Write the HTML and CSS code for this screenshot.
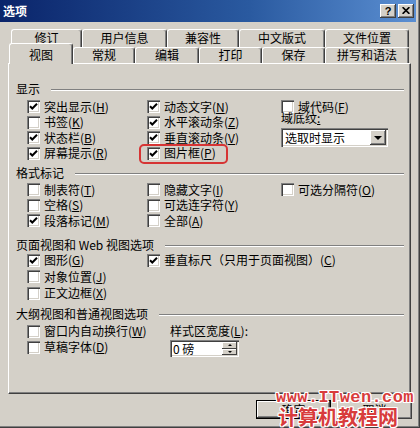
FILE: index.html
```html
<!DOCTYPE html>
<html lang="zh-CN">
<head>
<meta charset="utf-8">
<title>选项</title>
<link rel="stylesheet" href="styles.css">
</head>
<body>
<div class="win">
  <div class="titlebar">
    <span class="title">选项</span>
    <div class="tbtns">
      <span class="tbtn help">?</span>
      <span class="tbtn close"><svg width="8" height="7" viewBox="0 0 8 7"><path d="M0.6 0.2 L7.4 6.8 M7.4 0.2 L0.6 6.8" stroke="#000" stroke-width="1.7" fill="none"/></svg></span>
    </div>
  </div>

  <div class="tabs">
    <div class="tabrow back">
      <span class="tab t71">修订</span>
      <span class="tab t85">用户信息</span>
      <span class="tab t72">兼容性</span>
      <span class="tab t86">中文版式</span>
      <span class="tab t84">文件位置</span>
    </div>
    <div class="tabrow front">
      <span class="tab sel t64">视图</span>
      <span class="tab t62">常规</span>
      <span class="tab t64">编辑</span>
      <span class="tab t63">打印</span>
      <span class="tab t63">保存</span>
      <span class="tab t84">拼写和语法</span>
    </div>
  </div>

  <div class="panel">
    <section class="group g1">
      <div class="ghead"><span>显示</span><i class="etch"></i></div>
      <div class="grid rows4">
        <label class="cb"><span class="box on"><svg viewBox="0 0 13 13"><path d="M3 6.2 L5.3 8.5 L10 3.8" /></svg></span><span>突出显示(<u>H</u>)</span></label>
        <label class="cb"><span class="box"></span><span>书签(<u>K</u>)</span></label>
        <label class="cb"><span class="box on"><svg viewBox="0 0 13 13"><path d="M3 6.2 L5.3 8.5 L10 3.8" /></svg></span><span>状态栏(<u>B</u>)</span></label>
        <label class="cb"><span class="box on"><svg viewBox="0 0 13 13"><path d="M3 6.2 L5.3 8.5 L10 3.8" /></svg></span><span>屏幕提示(<u>R</u>)</span></label>

        <label class="cb"><span class="box on"><svg viewBox="0 0 13 13"><path d="M3 6.2 L5.3 8.5 L10 3.8" /></svg></span><span>动态文字(<u>N</u>)</span></label>
        <label class="cb"><span class="box on"><svg viewBox="0 0 13 13"><path d="M3 6.2 L5.3 8.5 L10 3.8" /></svg></span><span>水平滚动条(<u>Z</u>)</span></label>
        <label class="cb"><span class="box on"><svg viewBox="0 0 13 13"><path d="M3 6.2 L5.3 8.5 L10 3.8" /></svg></span><span>垂直滚动条(<u>V</u>)</span></label>
        <label class="cb"><span class="box on"><svg viewBox="0 0 13 13"><path d="M3 6.2 L5.3 8.5 L10 3.8" /></svg></span><span>图片框(<u>P</u>)</span></label>

        <label class="cb"><span class="box"></span><span>域代码(<u>F</u>)</span></label>
        <div class="shade">
          <span class="lbl">域底纹<u>:</u></span>
          <div class="select"><span class="val">选取时显示</span><span class="dd"><i class="arrow"></i></span></div>
        </div>
      </div>
    </section>

    <section class="group g2">
      <div class="ghead"><span>格式标记</span><i class="etch"></i></div>
      <div class="grid rows3">
        <label class="cb"><span class="box"></span><span>制表符(<u>T</u>)</span></label>
        <label class="cb"><span class="box"></span><span>空格(<u>S</u>)</span></label>
        <label class="cb"><span class="box on"><svg viewBox="0 0 13 13"><path d="M3 6.2 L5.3 8.5 L10 3.8" /></svg></span><span>段落标记(<u>M</u>)</span></label>

        <label class="cb"><span class="box"></span><span>隐藏文字(<u>I</u>)</span></label>
        <label class="cb"><span class="box"></span><span>可选连字符(<u>Y</u>)</span></label>
        <label class="cb"><span class="box"></span><span>全部(<u>A</u>)</span></label>

        <label class="cb"><span class="box"></span><span>可选分隔符(<u>O</u>)</span></label>
      </div>
    </section>

    <section class="group g3">
      <div class="ghead"><span>页面视图和 Web 视图选项</span><i class="etch"></i></div>
      <div class="grid rows3b">
        <label class="cb"><span class="box on"><svg viewBox="0 0 13 13"><path d="M3 6.2 L5.3 8.5 L10 3.8" /></svg></span><span>图形(<u>G</u>)</span></label>
        <label class="cb"><span class="box"></span><span>对象位置(<u>J</u>)</span></label>
        <label class="cb"><span class="box"></span><span>正文边框(<u>X</u>)</span></label>

        <label class="cb"><span class="box on"><svg viewBox="0 0 13 13"><path d="M3 6.2 L5.3 8.5 L10 3.8" /></svg></span><span>垂直标尺（只用于页面视图）(<u>C</u>)</span></label>
      </div>
    </section>

    <section class="group g4">
      <div class="ghead"><span>大纲视图和普通视图选项</span><i class="etch"></i></div>
      <div class="grid rows2">
        <label class="cb"><span class="box"></span><span>窗口内自动换行(<u>W</u>)</span></label>
        <label class="cb"><span class="box"></span><span>草稿字体(<u>D</u>)</span></label>

        <span class="lbl2">样式区宽度(<u>L</u>):</span>
        <div class="spin"><span class="val">0 磅</span><span class="spinbtns"><span class="sb up"><i></i></span><span class="sb down"><i></i></span></span></div>
      </div>
    </section>
  </div>

  <div class="actions">
    <button class="btn default">确定</button>
    <button class="btn">取消</button>
  </div>

  <div class="highlight"></div>
  <div class="watermark">
    <span class="wm1">www.ITwen.com</span>
    <span class="wm2">计算机教程网</span>
  </div>
</div>
</body>
</html>
```

FILE: styles.css
```css
* { box-sizing: border-box; }

html, body {
  margin: 0;
  padding: 0;
  background: #d4d0c8;
}

body {
  width: 420px;
  height: 428px;
  overflow: hidden;
  font-family: "Noto Sans CJK SC", "Noto Sans", sans-serif;
  font-size: 12px;
  color: #000;
}

.win {
  position: relative;
  width: 420px;
  height: 428px;
  padding: 0 4px 4px 0;
  background: #d4d0c8;
  box-shadow: inset -1px -1px #404040, inset -2px -2px #808080;
}

/* title bar */
.titlebar {
  height: 22px;
  display: flex;
  align-items: center;
  justify-content: space-between;
  padding: 0 2px 0 3px;
  background: linear-gradient(to right, #0a246a 0%, #2a5aa0 60%, #5b8fd2 100%);
}

.title {
  color: #fff;
  font-weight: bold;
  font-size: 12px;
  line-height: 14px;
}

.tbtns {
  display: flex;
  gap: 2px;
}

.tbtn {
  width: 16px;
  height: 14px;
  background: #d4d0c8;
  box-shadow: inset -1px -1px #404040, inset 1px 1px #fff, inset -2px -2px #808080;
  display: flex;
  align-items: center;
  justify-content: center;
}

.help {
  font-family: "Liberation Sans", Arial, sans-serif;
  font-weight: bold;
  font-size: 11px;
  line-height: 12px;
  padding-bottom: 1px;
}

.close svg { display: block; margin-bottom: 1px; }

/* tabs */
.tabs {
  margin-top: 7px;
}

.tabrow {
  display: flex;
}

.tabrow.back {
  height: 18px;
  margin-left: 11px;
}

.tabrow.front {
  height: 16px;
  margin-left: 9px;
}

.tab {
  height: 100%;
  border: 1px solid;
  border-color: #fff #404040 transparent #fff;
  border-bottom: none;
  border-radius: 3px 3px 0 0;
  box-shadow: inset -1px 0 #808080;
  background: #d4d0c8;
  text-align: center;
  white-space: nowrap;
}

.back .tab { line-height: 16px; }
.front .tab { line-height: 14px; }

.front .tab.sel {
  position: relative;
  z-index: 1;
  height: 21px;
  margin-top: -4px;
  padding-top: 3px;
  line-height: 16px;
}

.t62 { width: 62px; }
.t63 { width: 63px; }
.t64 { width: 64px; }
.t71 { width: 71px; }
.t72 { width: 72px; }
.t84 { width: 84px; }
.t85 { width: 85px; }
.t86 { width: 86px; }

/* panel */
.panel {
  margin-left: 8px;
  width: 403px;
  height: 331px;
  border-top: 1px solid #fff;
  border-left: 1px solid #fff;
  border-right: 1px solid #404040;
  border-bottom: 1px solid #404040;
  box-shadow: inset -1px -1px #808080;
  padding-top: 18px;
}

.ghead {
  height: 14px;
  display: flex;
  align-items: center;
  gap: 11px;
  padding: 0 6px 0 7px;
  line-height: 14px;
  white-space: nowrap;
}

.etch {
  flex: 1;
  height: 2px;
  border-top: 1px solid #808080;
  border-bottom: 1px solid #fff;
  margin-top: 1px;
}

.grid {
  display: grid;
  grid-auto-flow: column;
  grid-template-columns: 120px 134px 1fr;
  padding-left: 18px;
}

.g1 .grid { margin-top: 3px; }
.rows4 { grid-template-rows: repeat(4, 15.5px); }

.g2 { margin-top: 5px; }
.g2 .grid { margin-top: 2px; }
.rows3 { grid-template-rows: repeat(3, 15.5px); }

.g3 { margin-top: 9.5px; }
.g3 .grid { margin-top: 0; }
.rows3b { grid-template-rows: repeat(3, 16.5px); }

.g4 { margin-top: 5.5px; }
.g4 .grid {
  margin-top: 2px;
  grid-template-columns: 143px 1fr;
}
.rows2 { grid-template-rows: repeat(2, 16px); }

.cb {
  display: flex;
  align-items: center;
  gap: 4px;
  white-space: nowrap;
  line-height: 14px;
}

.box {
  flex: 0 0 13px;
  width: 13px;
  height: 13px;
  background: #fff;
  box-shadow: inset 1px 1px #808080, inset 2px 2px #404040, inset -1px -1px #fff, inset -2px -2px #d4d0c8;
}

.box svg {
  display: block;
  width: 13px;
  height: 13px;
}

.box svg path {
  fill: none;
  stroke: #000;
  stroke-width: 2;
}

u { text-decoration: underline; text-underline-offset: 1px; }

/* field shading */
.shade {
  grid-row: span 3;
  display: flex;
  flex-direction: column;
}

.lbl {
  height: 14px;
  line-height: 14px;
  margin-top: -3.5px;
}

.select {
  margin-top: 3px;
  width: 107px;
  height: 19px;
  background: #fff;
  box-shadow: inset 1px 1px #808080, inset 2px 2px #404040, inset -1px -1px #fff, inset -2px -2px #d4d0c8;
  display: flex;
  align-items: center;
  justify-content: space-between;
  padding: 2px;
}

.select .val {
  padding-left: 2px;
  line-height: 14px;
}

.dd {
  width: 16px;
  height: 15px;
  background: #d4d0c8;
  box-shadow: inset -1px -1px #404040, inset 1px 1px #fff, inset -2px -2px #808080;
  display: flex;
  align-items: center;
  justify-content: center;
}

.arrow {
  width: 0;
  height: 0;
  border-left: 4px solid transparent;
  border-right: 4px solid transparent;
  border-top: 4px solid #000;
  margin-top: 1px;
}

/* style area width */
.lbl2 {
  align-self: center;
  line-height: 14px;
  white-space: nowrap;
}

.spin {
  align-self: end;
  width: 69px;
  height: 17px;
  background: #fff;
  box-shadow: inset 1px 1px #808080, inset 2px 2px #404040, inset -1px -1px #fff, inset -2px -2px #d4d0c8;
  display: flex;
  justify-content: space-between;
  padding: 2px;
  margin-bottom: -2px;
}

.spin .val {
  padding-left: 1px;
  line-height: 13px;
}

.spinbtns {
  display: flex;
  flex-direction: column;
  width: 15px;
}

.sb {
  flex: 1;
  background: #d4d0c8;
  box-shadow: inset -1px -1px #404040, inset 1px 1px #fff;
  display: flex;
  align-items: center;
  justify-content: center;
}

.sb i {
  width: 0;
  height: 0;
  border-left: 2px solid transparent;
  border-right: 2px solid transparent;
}

.sb.up i { border-bottom: 2px solid #000; }
.sb.down i { border-top: 2px solid #000; }

/* bottom buttons */
.actions {
  display: flex;
  justify-content: flex-end;
  gap: 6px;
  margin-top: 6px;
  padding-right: 4px;
}

.btn {
  width: 75px;
  height: 19px;
  padding: 0;
  border: none;
  background: #d4d0c8;
  font-family: "Noto Sans CJK SC", sans-serif;
  font-size: 12px;
  line-height: 14px;
  color: #000;
  box-shadow: inset -1px -1px #404040, inset 1px 1px #fff, inset -2px -2px #808080;
}

.btn.default {
  border: 1px solid #000;
}

/* overlays */
.highlight {
  position: absolute;
  left: 139px;
  top: 144px;
  width: 89px;
  height: 20px;
  border: 2px solid #d63434;
  border-radius: 5px;
}

.watermark {
  position: absolute;
  left: 274px;
  top: 389px;
  width: 142px;
  display: flex;
  flex-direction: column;
  align-items: center;
  color: #d83c3c;
  font-weight: bold;
  text-shadow: 1px 0 #fff, -1px 0 #fff, 0 1px #fff, 0 -1px #fff,
               1px 1px #fff, -1px -1px #fff, 1px -1px #fff, -1px 1px #fff;
}

.wm1 {
  font-family: "Liberation Mono", monospace;
  font-size: 17px;
  line-height: 17px;
  letter-spacing: 0.4px;
}

.wm2 {
  font-family: "Noto Sans CJK SC", sans-serif;
  font-size: 20px;
  line-height: 22px;
  margin-left: -14px;
}
```
